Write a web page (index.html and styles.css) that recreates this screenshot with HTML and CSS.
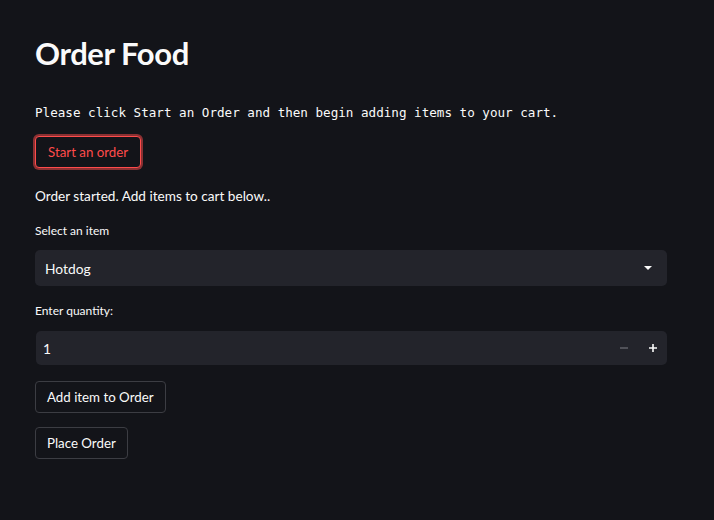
FILE: index.html
```html
<!DOCTYPE html>
<html lang="en">
<head>
<meta charset="utf-8">
<title>Order Food</title>
<link rel="stylesheet" href="styles.css">
</head>
<body>
<main class="app">
  <h1 class="title">Order Food</h1>
  <p class="mono">Please click Start an Order and then begin adding items to your cart.</p>
  <button class="btn btn-active">Start an order</button>
  <p class="text">Order started. Add items to cart below..</p>
  <div class="field">
    <label class="label">Select an item</label>
    <div class="select">
      <span>Hotdog</span>
      <svg class="caret" width="10" height="6" viewBox="0 0 10 6"><path d="M1 1h8L5 5z" fill="#fafafa"/></svg>
    </div>
  </div>
  <div class="field field-qty">
    <label class="label">Enter quantity:</label>
    <div class="number">
      <span class="num-value">1</span>
      <div class="steppers">
        <span class="step step-minus"><svg width="10" height="10" viewBox="0 0 10 10"><path d="M1 5h8" stroke="#5c5d64" stroke-width="1.6"/></svg></span>
        <span class="step"><svg width="10" height="10" viewBox="0 0 10 10"><path d="M1 5h8M5 1v8" stroke="#fafafa" stroke-width="1.6"/></svg></span>
      </div>
    </div>
  </div>
  <button class="btn btn-add">Add item to Order</button>
  <button class="btn btn-place">Place Order</button>
</main>
</body>
</html>
```
FILE: styles.css
```css
html, body {
  margin: 0;
  padding: 0;
  background: #131419;
}
body {
  color: #fafafa;
  font-family: Lato, "Noto Sans", sans-serif;
}
.app {
  width: 632px;
  padding: 34px 0 0 35px;
  display: flex;
  flex-direction: column;
  align-items: flex-start;
}
.title {
  margin: 0;
  font-size: 31px;
  line-height: 38px;
  font-weight: 700;
  letter-spacing: -0.4px;
}
.mono {
  margin: 32px 0 0;
  font-family: "DejaVu Sans Mono", "Liberation Mono", monospace;
  font-size: 12.6px;
  line-height: 18px;
  white-space: nowrap;
}
.btn {
  font-family: Lato, "Noto Sans", sans-serif;
  font-size: 13.3px;
  color: #fafafa;
  background: #131419;
  border: 1px solid #3c3d43;
  border-radius: 4px;
  height: 32px;
  padding: 0 11px;
  line-height: 30px;
}
.btn-active {
  margin-top: 14px;
  padding: 0 12px;
  color: #ff4b4b;
  border-color: #ff4b4b;
  box-shadow: 0 0 0 2px rgba(255, 75, 75, 0.5);
}
.text {
  margin: 18px 0 0;
  font-size: 13.6px;
  line-height: 20px;
}
.field {
  width: 632px;
  margin-top: 17px;
}
.label {
  display: block;
  font-size: 12px;
  line-height: 16px;
  margin-bottom: 11px;
}
.select {
  height: 36px;
  background: #23242b;
  border-radius: 5px;
  display: flex;
  align-items: center;
  justify-content: space-between;
  padding: 0 10px 0 10px;
  font-size: 13.8px;
}
.caret {
  margin-right: 4px;
}
.field-qty {
  margin-top: 17px;
}
.field-qty .label {
  margin-bottom: 12px;
}
.number {
  margin-left: 1px;
  height: 34px;
  background: #23242b;
  border-radius: 5px;
  display: flex;
  align-items: center;
  justify-content: space-between;
  padding: 0 0 0 7px;
  font-size: 13.8px;
}
.steppers {
  display: flex;
  height: 100%;
}
.step {
  width: 29px;
  display: flex;
  align-items: center;
  justify-content: center;
}
.btn-add {
  margin-top: 16px;
}
.btn-place {
  margin-top: 14px;
}
```
